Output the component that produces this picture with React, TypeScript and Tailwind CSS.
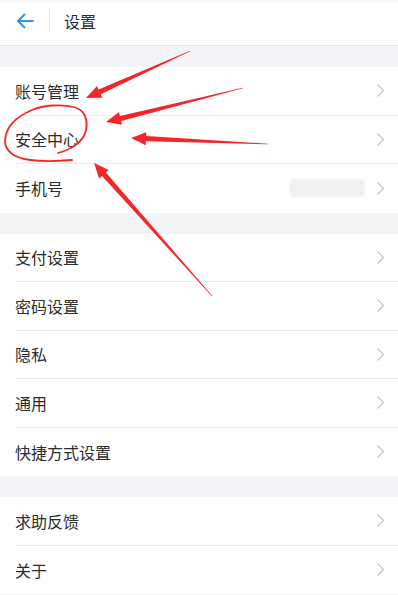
import React from "react";

type Pt = [number, number];

const sections: string[][] = [
  ["账号管理", "安全中心", "手机号"],
  ["支付设置", "密码设置", "隐私", "通用", "快捷方式设置"],
  ["求助反馈", "关于"],
];

// tapered arrow: thin at the tail, wide at the head
function arrowPoints(tail: Pt, tip: Pt) {
  const dx = tip[0] - tail[0];
  const dy = tip[1] - tail[1];
  const len = Math.hypot(dx, dy);
  const ux = dx / len;
  const uy = dy / len;
  const nx = -uy;
  const ny = ux;
  const headLen = 15;
  const headW = 6.5;
  const neckW = 2.6;
  const tailW = 0.3;
  const bx = tip[0] - ux * headLen;
  const by = tip[1] - uy * headLen;
  const p = (x: number, y: number) => `${x.toFixed(1)},${y.toFixed(1)}`;
  return [
    p(tail[0] + nx * tailW, tail[1] + ny * tailW),
    p(bx + nx * neckW, by + ny * neckW),
    p(bx + nx * headW, by + ny * headW),
    p(tip[0], tip[1]),
    p(bx - nx * headW, by - ny * headW),
    p(bx - nx * neckW, by - ny * neckW),
    p(tail[0] - nx * tailW, tail[1] - ny * tailW),
  ].join(" ");
}

const arrows: [Pt, Pt][] = [
  [[190, 51], [86, 98]],
  [[243, 88], [106, 122]],
  [[268, 144], [131, 138]],
  [[212, 296], [94, 163]],
];

function Chevron() {
  return (
    <svg width="9" height="15" viewBox="0 0 9 15" fill="none">
      <path d="M1.5 1.5 L7.5 7.5 L1.5 13.5" stroke="#c7c7cc" strokeWidth="1.4" />
    </svg>
  );
}

function Row({ label, last }: { label: string; last: boolean }) {
  return (
    <div className="h-[48.5px] pl-[15px] bg-white">
      <div
        className={`h-full flex items-center pr-[13px] ${
          last ? "" : "border-b border-[#ececef]"
        }`}
      >
        <span className="flex-1 text-[16px] text-[#2c2c2c]">{label}</span>
        {label === "手机号" && (
          <div className="w-[76px] h-[18px] mr-[11px] bg-[#f0f0f1] blur-[1px] rounded-sm" />
        )}
        <Chevron />
      </div>
    </div>
  );
}

export default function App() {
  return (
    <div
      className="relative w-[398px] h-[595px] overflow-hidden bg-[#f4f4f7]"
      style={{ fontFamily: '"Noto Sans CJK SC", "Noto Sans", sans-serif' }}
    >
      <div className="h-[46px] pb-[3px] bg-white border-b border-[#e6e6ea] flex items-center shadow-[inset_0_3px_3px_-2px_rgba(0,0,0,0.06)]">
        <div className="w-[49px] flex justify-center pl-[1px]">
          <svg width="18" height="16" viewBox="0 0 18 16" fill="none">
            <path
              d="M17 8 H2 M8.5 1.5 L2 8 L8.5 14.5"
              stroke="#2e97f0"
              strokeWidth="2"
              strokeLinecap="round"
              strokeLinejoin="round"
            />
          </svg>
        </div>
        <div className="w-px h-[24px] bg-[#e6e6ea]" />
        <span className="ml-[14px] text-[16px] text-[#2c2c2c]">设置</span>
      </div>

      <div className="flex flex-col gap-[21px] pt-[21px]">
        {sections.map((items, i) => (
          <div key={i} className="flex flex-col">
            {items.map((label, j) => (
              <Row key={label} label={label} last={j === items.length - 1} />
            ))}
          </div>
        ))}
      </div>

      <svg
        className="absolute inset-0 pointer-events-none"
        width="398"
        height="595"
        viewBox="0 0 398 595"
      >
        {arrows.map(([a, b], i) => (
          <polygon key={i} points={arrowPoints(a, b)} fill="#f5262a" />
        ))}
        <path
          d="M58 153 C70 150 84 142 86 130 C88 118 84 110 74 107 C62 104 44 105 32 110 C18 116 6 126 5 140 C5 152 15 158 30 160 C45 162 60 161 72 160"
          stroke="#f5262a"
          strokeWidth="1.8"
          fill="none"
          strokeLinecap="round"
          strokeLinejoin="round"
        />
      </svg>
    </div>
  );
}
